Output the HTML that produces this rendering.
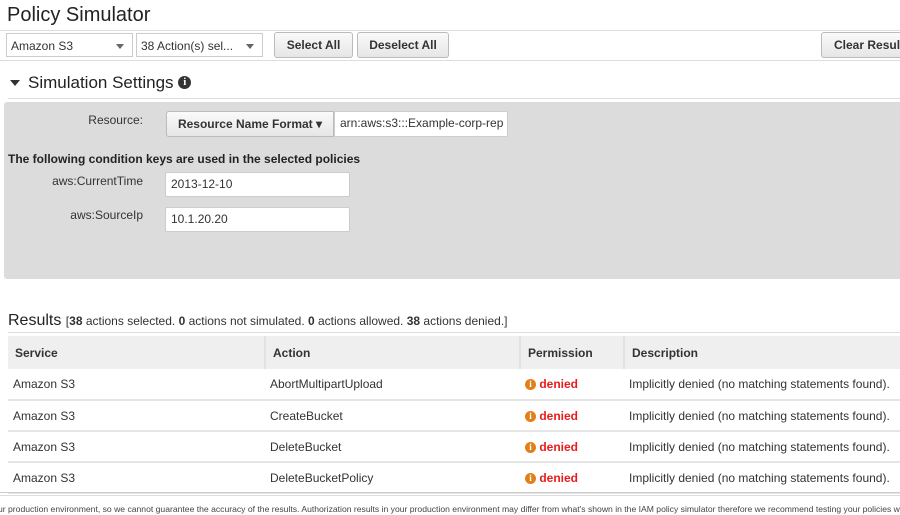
<!DOCTYPE html>
<html><head><style>
*{box-sizing:border-box;margin:0;padding:0}
body{width:900px;height:515px;overflow:hidden;background:#fff;font-family:"Liberation Sans",Arial,sans-serif;color:#333;position:relative}
.a{position:absolute;white-space:nowrap}
.hl{position:absolute;left:0;width:900px;height:1px;background:#ddd}
.sel{position:absolute;height:24px;border:1px solid #ccc;background:#fff;font-size:12px;padding:5px 4px;color:#333;white-space:nowrap}
.sel:after{content:"";position:absolute;right:8px;top:10px;border:4px solid transparent;border-top:5px solid #666}
.btn{position:absolute;height:26px;border:1px solid #bbb;border-radius:3px;background:linear-gradient(#fafafa,#e6e6e6);font-size:12px;font-weight:bold;text-align:center;line-height:24px;color:#333;white-space:nowrap;overflow:hidden}
.inp{position:absolute;background:#fff;border:1px solid #ccc;border-radius:2px;font-size:12px;padding:0 5px;line-height:23px;height:25px;color:#333;white-space:nowrap;overflow:hidden}
.lbl{position:absolute;font-size:12px;text-align:right;width:143px;left:0}
.info{display:inline-block;width:11px;height:11px;border-radius:50%;color:#fff;font-size:9px;font-weight:bold;text-align:center;line-height:11px;font-family:"Liberation Serif",serif;vertical-align:middle}
table{position:absolute;left:8px;top:336px;width:900px;border-collapse:collapse;font-size:12px}
th{background:#efefef;text-align:left;height:33px;padding-left:7px;border-left:2px solid #e2e2e2;font-weight:bold}
th:first-child{border-left:none}
td{height:31px;padding-left:5px;border-bottom:2px solid #e5e5e5;white-space:nowrap}
.d{color:#e81c1c;font-weight:bold}
</style></head><body>
<div class="a" style="left:7px;top:4px;font-size:20px;color:#222">Policy Simulator</div>
<div class="hl" style="top:30px"></div>
<div class="hl" style="top:60px"></div>
<div class="sel" style="left:6px;top:33px;width:127px">Amazon S3</div>
<div class="sel" style="left:136px;top:33px;width:127px">38 Action(s) sel...</div>
<div class="btn" style="left:274px;top:32px;width:79px">Select All</div>
<div class="btn" style="left:357px;top:32px;width:92px">Deselect All</div>
<div class="btn" style="left:821px;top:32px;width:90px;text-align:left;padding-left:12px">Clear Results</div>
<div class="a" style="left:10px;top:80px;width:0;height:0;border:5px solid transparent;border-top:6px solid #333"></div>
<div class="a" style="left:28px;top:73px;font-size:17px;color:#222">Simulation Settings <span class="info" style="background:#333;width:13px;height:13px;line-height:13px;font-size:11px;margin-top:-3px">i</span></div>
<div class="hl" style="top:98px;left:8px"></div>
<div class="a" style="left:4px;top:102px;width:900px;height:177px;background:#dcdcdc;border-radius:3px"></div>
<div class="lbl" style="top:113px">Resource:</div>
<div class="btn" style="left:166px;top:111px;width:168px;height:26px;border-radius:3px 0 0 3px">Resource Name Format ▾</div>
<div class="inp" style="left:334px;top:111px;width:174px;height:26px">arn:aws:s3:::Example-corp-rep</div>
<div class="a" style="left:8px;top:152px;font-size:12px;font-weight:bold;color:#222">The following condition keys are used in the selected policies</div>
<div class="lbl" style="top:174px">aws:CurrentTime</div>
<div class="inp" style="left:165px;top:172px;width:185px">2013-12-10</div>
<div class="lbl" style="top:208px">aws:SourceIp</div>
<div class="inp" style="left:165px;top:207px;width:185px">10.1.20.20</div>
<div class="a" style="left:8px;top:312px;font-size:16px;color:#222">Results <span style="font-size:12px;color:#333">[<b>38</b> actions selected. <b>0</b> actions not simulated. <b>0</b> actions allowed. <b>38</b> actions denied.]</span></div>
<div class="hl" style="top:332px;left:8px"></div>
<table>
<tr><th style="width:257px">Service</th><th style="width:255px">Action</th><th style="width:104px">Permission</th><th>Description</th></tr>
<tr><td>Amazon S3</td><td>AbortMultipartUpload</td><td><span class="info" style="background:#e0801c">i</span> <span class="d">denied</span></td><td>Implicitly denied (no matching statements found).</td></tr>
<tr><td>Amazon S3</td><td>CreateBucket</td><td><span class="info" style="background:#e0801c">i</span> <span class="d">denied</span></td><td>Implicitly denied (no matching statements found).</td></tr>
<tr><td>Amazon S3</td><td>DeleteBucket</td><td><span class="info" style="background:#e0801c">i</span> <span class="d">denied</span></td><td>Implicitly denied (no matching statements found).</td></tr>
<tr><td>Amazon S3</td><td>DeleteBucketPolicy</td><td><span class="info" style="background:#e0801c">i</span> <span class="d">denied</span></td><td>Implicitly denied (no matching statements found).</td></tr>
</table>
<div class="hl" style="top:492px;background:#ccc"></div>
<div class="hl" style="top:495px;background:#ddd"></div>
<div class="a" style="left:-2px;top:504px;font-size:8.6px;color:#444">ur production environment, so we cannot guarantee the accuracy of the results. Authorization results in your production environment may differ from what's shown in the IAM policy simulator therefore we recommend testing your policies w</div>
</body></html>
